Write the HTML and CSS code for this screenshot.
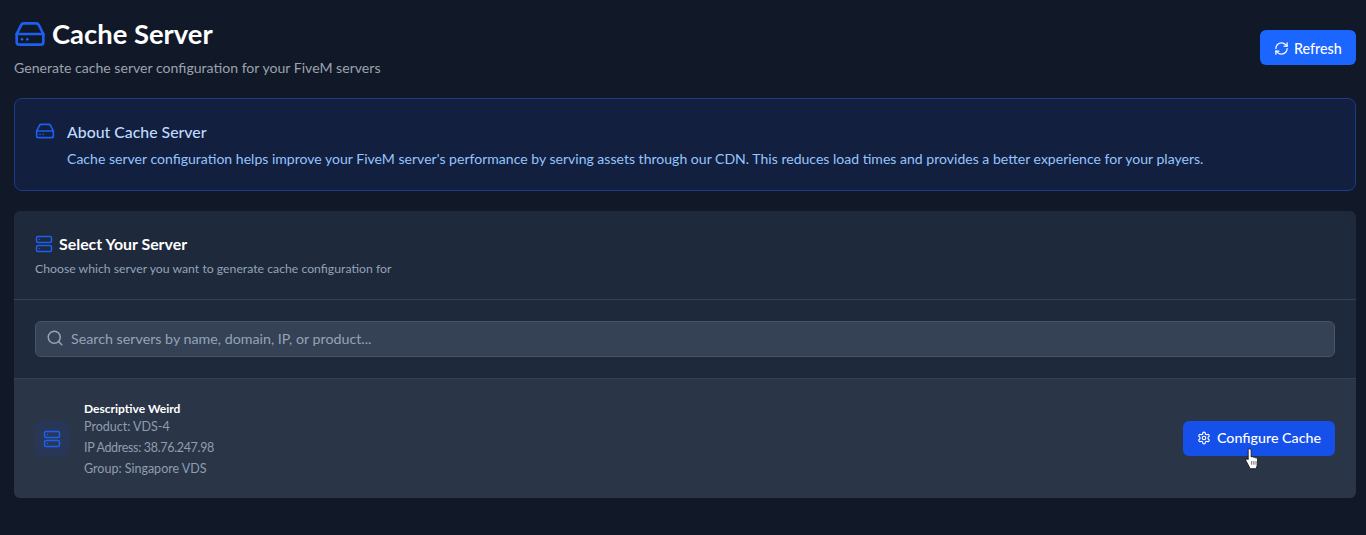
FILE: index.html
```html
<!DOCTYPE html>
<html lang="en">

<head>
  <meta charset="UTF-8" />
  <title>Cache Server</title>
  <link rel="stylesheet" href="styles.css">
</head>

<body>
  <main class="page">
    <header class="page-head">
      <div>
        <h1 class="page-title">
          <svg class="icon icon-title" viewBox="0 0 24 24">
            <line x1="22" y1="12" x2="2" y2="12" />
            <path d="M5.45 5.11 2 12v6a2 2 0 0 0 2 2h16a2 2 0 0 0 2-2v-6l-3.45-6.89A2 2 0 0 0 16.76 4H7.24a2 2 0 0 0-1.79 1.11z" />
            <line x1="6" y1="16" x2="6.01" y2="16" />
            <line x1="10" y1="16" x2="10.01" y2="16" />
          </svg>
          Cache Server
        </h1>
        <p class="page-sub">Generate cache server configuration for your FiveM servers</p>
      </div>
      <button class="btn btn-refresh">
        <svg class="icon icon-refresh" viewBox="0 0 24 24">
          <path d="M3 12a9 9 0 0 1 9-9 9.75 9.75 0 0 1 6.74 2.74L21 8" />
          <path d="M21 3v5h-5" />
          <path d="M21 12a9 9 0 0 1-9 9 9.75 9.75 0 0 1-6.74-2.74L3 16" />
          <path d="M8 16H3v5" />
        </svg>
        Refresh
      </button>
    </header>

    <section class="about">
      <svg class="icon icon-about" viewBox="0 0 24 24">
        <line x1="22" y1="12" x2="2" y2="12" />
        <path d="M5.45 5.11 2 12v6a2 2 0 0 0 2 2h16a2 2 0 0 0 2-2v-6l-3.45-6.89A2 2 0 0 0 16.76 4H7.24a2 2 0 0 0-1.79 1.11z" />
        <line x1="6" y1="16" x2="6.01" y2="16" />
        <line x1="10" y1="16" x2="10.01" y2="16" />
      </svg>
      <div>
        <h2 class="about-title">About Cache Server</h2>
        <p class="about-text">Cache server configuration helps improve your FiveM server's performance by serving assets through our CDN. This reduces load times and provides a better experience for your players.</p>
      </div>
    </section>

    <section class="card">
      <div class="card-head">
        <h2 class="card-title">
          <svg class="icon icon-card" viewBox="0 0 24 24">
            <rect x="2" y="2" width="20" height="8" rx="2" ry="2" />
            <rect x="2" y="14" width="20" height="8" rx="2" ry="2" />
            <line x1="6" y1="6" x2="6.01" y2="6" />
            <line x1="6" y1="18" x2="6.01" y2="18" />
          </svg>
          Select Your Server
        </h2>
        <p class="card-sub">Choose which server you want to generate cache configuration for</p>
      </div>

      <div class="search-wrap">
        <div class="search">
          <svg class="icon icon-search" viewBox="0 0 24 24">
            <circle cx="11" cy="11" r="8" />
            <path d="m21 21-4.3-4.3" />
          </svg>
          <span class="search-text">Search servers by name, domain, IP, or product...</span>
        </div>
      </div>

      <div class="server-row">
        <div class="server-tile">
          <svg class="icon icon-card" viewBox="0 0 24 24">
            <rect x="2" y="2" width="20" height="8" rx="2" ry="2" />
            <rect x="2" y="14" width="20" height="8" rx="2" ry="2" />
            <line x1="6" y1="6" x2="6.01" y2="6" />
            <line x1="6" y1="18" x2="6.01" y2="18" />
          </svg>
        </div>
        <div class="server-info">
          <div class="server-name">Descriptive Weird</div>
          <div class="server-line first">Product: VDS-4</div>
          <div class="server-line ip">IP Address: 38.76.247.98</div>
          <div class="server-line">Group: Singapore VDS</div>
        </div>
        <button class="btn btn-config">
          <svg class="icon icon-gear" viewBox="0 0 24 24">
            <path d="M12.22 2h-.44a2 2 0 0 0-2 2v.18a2 2 0 0 1-1 1.73l-.43.25a2 2 0 0 1-2 0l-.15-.08a2 2 0 0 0-2.73.73l-.22.38a2 2 0 0 0 .73 2.73l.15.1a2 2 0 0 1 1 1.72v.51a2 2 0 0 1-1 1.74l-.15.09a2 2 0 0 0-.73 2.73l.22.38a2 2 0 0 0 2.73.73l.15-.08a2 2 0 0 1 2 0l.43.25a2 2 0 0 1 1 1.73V20a2 2 0 0 0 2 2h.44a2 2 0 0 0 2-2v-.18a2 2 0 0 1 1-1.73l.43-.25a2 2 0 0 1 2 0l.15.08a2 2 0 0 0 2.73-.73l.22-.39a2 2 0 0 0-.73-2.73l-.15-.08a2 2 0 0 1-1-1.74v-.5a2 2 0 0 1 1-1.74l.15-.09a2 2 0 0 0 .73-2.73l-.22-.38a2 2 0 0 0-2.73-.73l-.15.08a2 2 0 0 1-2 0l-.43-.25a2 2 0 0 1-1-1.73V4a2 2 0 0 0-2-2z" />
            <circle cx="12" cy="12" r="3" />
          </svg>
          Configure Cache
        </button>
      </div>
    </section>
  </main>

  <!-- mouse pointer caught in the screenshot -->
  <svg class="cursor" viewBox="0 0 14 22">
    <path d="M4 .8c1 0 1.700.7 1.700 1.700v6l1-.2c.7-.1 1.200.1 1.500.6.700-.3 1.400-.1 1.700.5.900-.2 1.600.2 1.800 1 .2 1.200.2 3 .1 4.400-.1 1.700-.6 3.200-1.400 4.600-.2.300-.4.400-.7.400H5.300c-.3 0-.5-.1-.7-.4L1 12.700c-.5-.8-.3-1.500.2-1.900.6-.4 1.300-.2 1.700.3V2.500C2.900 1.500 3 .8 4 .8z" />
    <path class="cursor-lines" d="M6.200 12.500v3.500M8.300 12.500v3.500M10.400 12.500v3.500" />
  </svg>
</body>

</html>
```

FILE: styles.css
```css
* {
  box-sizing: border-box;
  font-family: Lato, "Open Sans", sans-serif;
}

html,
body {
  height: 100%;
}

body {
  margin: 0;
  background-color: #111827;
  overflow: hidden;
  position: relative;
}

h1,
h2,
p {
  margin: 0;
}

.icon {
  fill: none;
  stroke: currentColor;
  stroke-width: 2;
  stroke-linecap: round;
  stroke-linejoin: round;
  flex-shrink: 0;
}

.page {
  padding: 18px 10px 0 14px;
}

.page-head {
  display: flex;
  justify-content: space-between;
  align-items: flex-start;
  height: 80px;
}

.page-title {
  display: flex;
  align-items: center;
  gap: 6px;
  font-size: 27.400px;
  line-height: 32px;
  font-weight: 700;
  color: #fff;
}

.icon-title {
  width: 32px;
  height: 32px;
  color: #1d5ff0;
}

.page-sub {
  margin-top: 8px;
  font-size: 14.100px;
  line-height: 20px;
  color: #9ca3af;
}

.btn {
  display: flex;
  align-items: center;
  border: 0;
  border-radius: 6px;
  padding: 0 0 0 14px;
  color: #fff;
  font-weight: 500;
  white-space: nowrap;
}

.icon-refresh {
  width: 15px;
  height: 15px;
}

.icon-gear {
  width: 14px;
  height: 14px;
}

.btn-refresh {
  gap: 5px;
  margin-top: 12px;
  width: 96px;
  height: 35px;
  padding-top: 1px;
  background-color: #1a66ff;
  font-size: 14.300px;
}

.about {
  display: flex;
  gap: 12px;
  height: 93px;
  padding: 22px 20px 0;
  border: 1px solid #1e3a8a;
  border-radius: 8px;
  background-color: #131f3f;
}

.icon-about {
  width: 20px;
  height: 20px;
  color: #1d5ff0;
}

.about-title {
  margin-top: 1px;
  font-size: 15.850px;
  line-height: 20px;
  font-weight: 500;
  color: #bfdbfe;
}

.about-text {
  margin-top: 7px;
  font-size: 14.050px;
  line-height: 20px;
  color: #93c5fd;
}

.card {
  margin-top: 20px;
  border-radius: 6px;
  background-color: #1e293b;
  overflow: hidden;
}

.card-head {
  height: 89px;
  padding: 23px 21px 0;
  border-bottom: 1px solid #334155;
}

.card-title {
  display: flex;
  align-items: center;
  gap: 6px;
  font-size: 15.900px;
  line-height: 20px;
  font-weight: 700;
  color: #fff;
}

.icon-card {
  width: 18px;
  height: 18px;
  color: #1d5ff0;
}

.card-sub {
  margin-top: 5px;
  font-size: 12.250px;
  line-height: 20px;
  color: #94a3b8;
}

.search-wrap {
  height: 79px;
  padding: 21px;
  border-bottom: 1px solid #334155;
}

.search {
  display: flex;
  align-items: center;
  gap: 7px;
  height: 36px;
  padding: 0 10px 2px;
  border: 1px solid #475569;
  border-radius: 6px;
  background-color: #354256;
}

.icon-search {
  width: 18px;
  height: 18px;
  color: #94a3b8;
}

.search-text {
  font-size: 14.250px;
  color: #94a3b8;
}

.server-row {
  display: flex;
  align-items: center;
  height: 119px;
  padding: 0 21px;
  background-color: #2a3547;
}

.server-tile {
  display: flex;
  align-items: center;
  justify-content: center;
  width: 34px;
  height: 35px;
  border-radius: 6px;
  background-color: rgba(29, 78, 216, 0.12);
}

.server-info {
  flex: 1;
  margin-left: 14px;
  padding: 2px 0 0 1px;
}

.server-name {
  font-size: 12px;
  line-height: 16px;
  font-weight: 700;
  color: #fff;
}

.server-line {
  margin-top: 3px;
  font-size: 12.500px;
  line-height: 18px;
  color: #8f9db1;
}

.server-line.first {
  margin-top: 1px;
}

.server-line.ip {
  letter-spacing: -0.33px;
}

.btn-config {
  gap: 6px;
  width: 152px;
  height: 35px;
  padding-bottom: 2px;
  background-color: #1550ea;
  font-size: 14.250px;
}

.cursor {
  position: absolute;
  left: 1245px;
  top: 448px;
  width: 15px;
  height: 23px;
}

.cursor path {
  fill: #fff;
  stroke: #111;
  stroke-width: 0.8;
}

.cursor .cursor-lines {
  fill: none;
  stroke-width: 0.6;
}
```
